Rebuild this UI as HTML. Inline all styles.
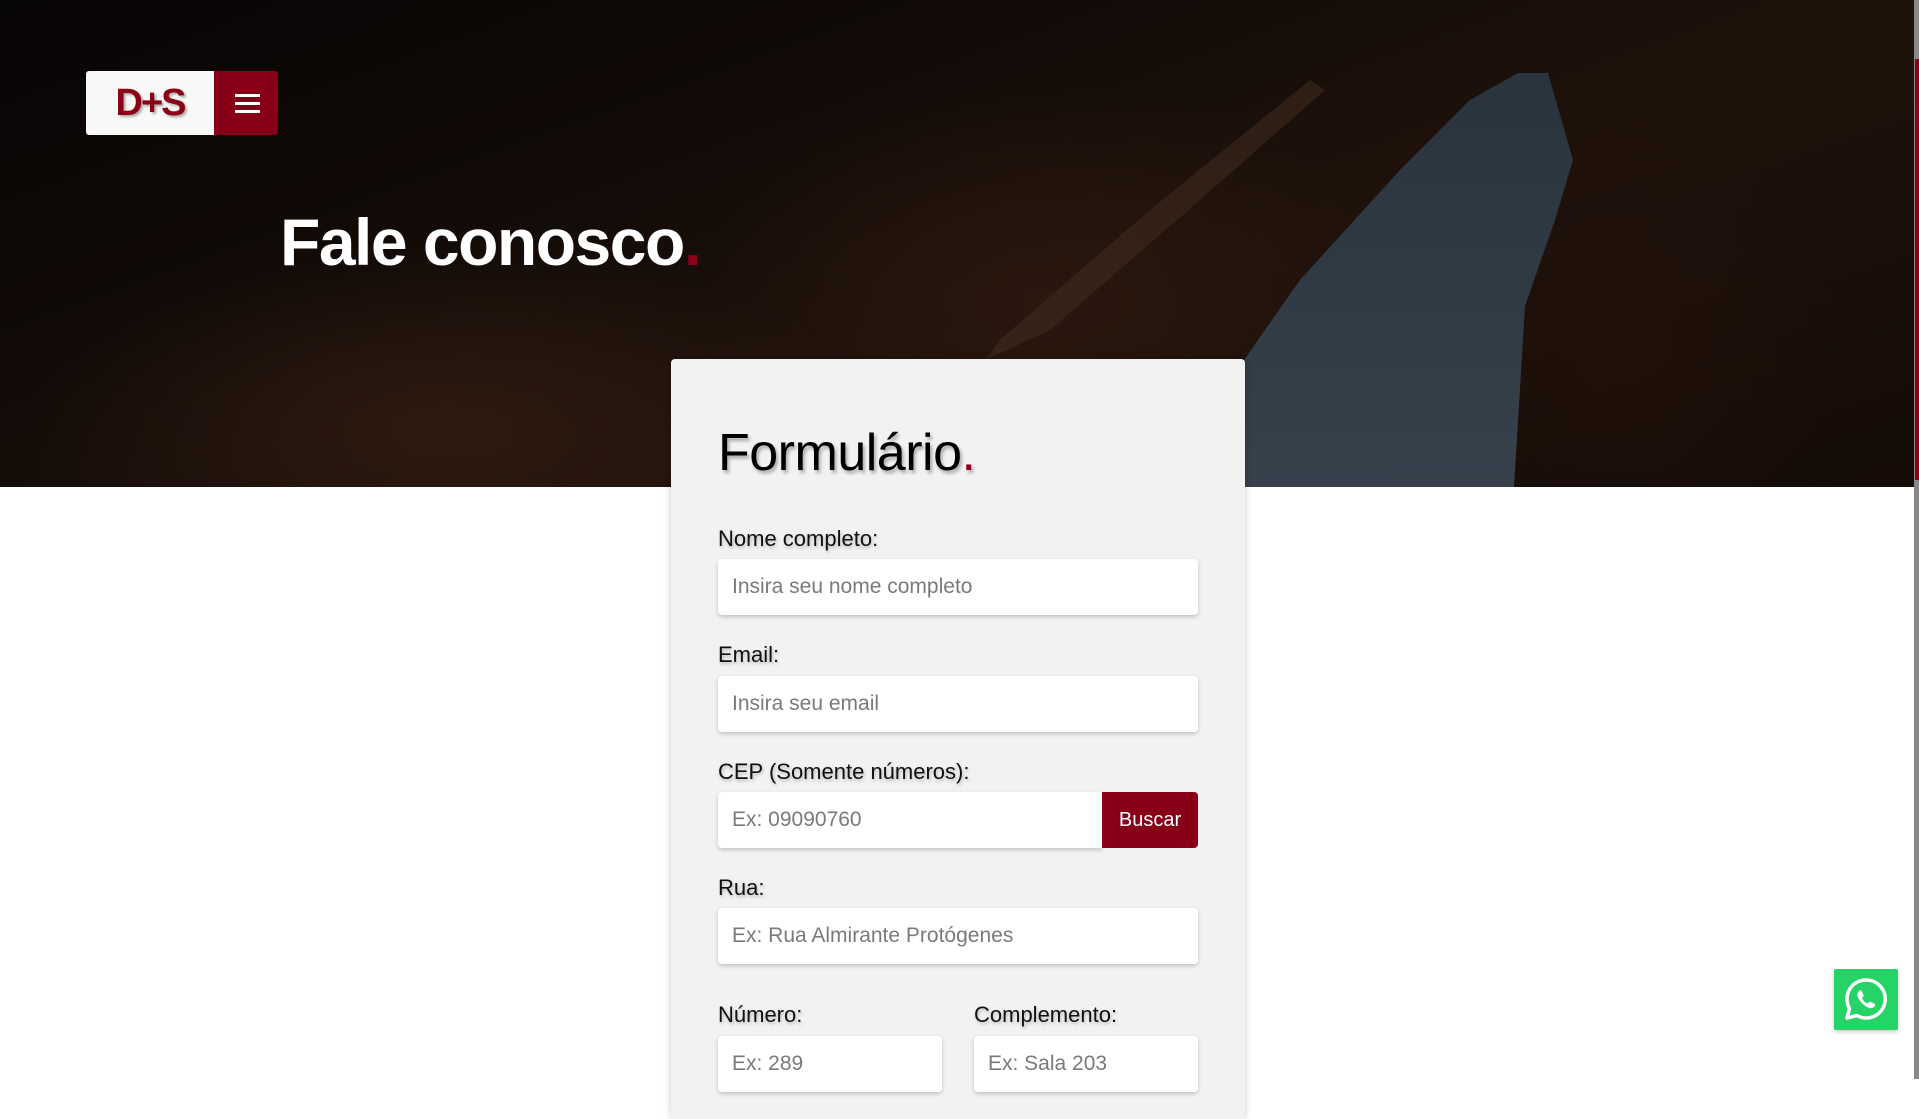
<!DOCTYPE html>
<html><head><meta charset="utf-8"><style>
*{margin:0;padding:0;box-sizing:border-box}
html,body{width:1919px;height:1079px;overflow:hidden;background:#fff;font-family:"Liberation Sans",sans-serif}
.hero{position:absolute;left:0;top:0;width:1914px;height:487px;overflow:hidden;
background:radial-gradient(ellipse 600px 260px at 450px 430px,#2e1a10 0%,rgba(40,22,14,0) 70%),
radial-gradient(ellipse 500px 300px at 1050px 300px,#2a170e 0%,rgba(30,16,10,0) 70%),
radial-gradient(ellipse 300px 350px at 1620px 330px,#201009 0%,rgba(20,10,6,0) 70%),
linear-gradient(160deg,#080505 0%,#110a07 30%,#1f120b 60%,#150b07 100%)}
.sky{position:absolute;inset:0;background:linear-gradient(180deg,#27313b,#36414c);
clip-path:polygon(1518px 73px,1548px 73px,1573px 160px,1555px 220px,1525px 306px,1514px 487px,1175px 487px,1230px 380px,1300px 280px,1400px 170px,1470px 100px)}
.rim{position:absolute;inset:0;background:linear-gradient(120deg,#5a4030,#2e1c12);opacity:.55;
clip-path:polygon(1310px 80px,1325px 90px,1200px 200px,1050px 330px,985px 360px,1000px 340px,1150px 210px)}
.logo{position:absolute;left:86px;top:71px;width:192px;height:64px;border-radius:3px;overflow:hidden;display:flex}
.logo .w{width:128px;background:#f8f8f6;display:flex;align-items:center;justify-content:center;color:#8b0017;font-family:"Liberation Sans",sans-serif;font-weight:bold;font-size:38px;letter-spacing:-2px;text-shadow:2px 2px 2px rgba(0,0,0,.3)}
.logo .r{width:64px;background:#870017;position:relative}
.logo .r i{position:absolute;left:21px;width:25px;height:3px;background:#fff}
h1{position:absolute;left:280px;top:209px;color:#fff;font-size:66px;font-weight:bold;letter-spacing:-1.5px;line-height:1}
.dot{color:#8b0017}
.card{position:absolute;left:671px;top:359px;width:574px;height:760px;background:#f2f2f2;border-radius:4px;box-shadow:0 0 8px rgba(0,0,0,.2)}
h2{position:absolute;left:718px;top:427px;font-size:52px;font-weight:normal;color:#000;text-shadow:2px 3px 3px rgba(0,0,0,.3);line-height:1;letter-spacing:-.5px}
.lab{position:absolute;left:718px;font-size:22px;color:#111;text-shadow:1px 2px 3px rgba(0,0,0,.25)}
.in{position:absolute;background:#fff;border-radius:4px;box-shadow:0 2px 4px rgba(0,0,0,.2);height:56px;color:#7a7a7a;font-size:21px;padding-left:14px;line-height:56px}
.btn{position:absolute;left:1102px;top:792px;width:96px;height:56px;background:#870017;color:#fff;font-size:20px;line-height:56px;text-align:center;border-radius:0 4px 4px 0}
.wa{position:absolute;left:1834px;top:969px;width:64px;height:61px;background:#25d366;border-radius:2px;box-shadow:0 2px 4px rgba(0,0,0,.2)}
.sb{position:absolute;left:1914px;top:0;width:5px;height:1079px;background:#888}
.sbt{position:absolute;left:1915px;top:59px;width:4px;height:421px;background:#8b0017}
</style></head><body>
<div class="hero"><div class="sky"></div><div class="rim"></div></div>
<div class="logo"><div class="w">D+S</div><div class="r"><i style="top:23px"></i><i style="top:31px"></i><i style="top:39px"></i></div></div>
<h1>Fale conosco<span class="dot">.</span></h1>
<div class="card"></div>
<h2>Formulário<span class="dot">.</span></h2>
<div class="lab" style="top:526px">Nome completo:</div>
<div class="in" style="left:718px;top:559px;width:480px">Insira seu nome completo</div>
<div class="lab" style="top:642px">Email:</div>
<div class="in" style="left:718px;top:676px;width:480px">Insira seu email</div>
<div class="lab" style="top:759px">CEP (Somente números):</div>
<div class="in" style="left:718px;top:792px;width:384px;border-radius:4px 0 0 4px">Ex: 09090760</div>
<div class="btn">Buscar</div>
<div class="lab" style="top:875px">Rua:</div>
<div class="in" style="left:718px;top:908px;width:480px">Ex: Rua Almirante Protógenes</div>
<div class="lab" style="top:1002px">Número:</div>
<div class="lab" style="top:1002px;left:974px">Complemento:</div>
<div class="in" style="left:718px;top:1036px;width:224px">Ex: 289</div>
<div class="in" style="left:974px;top:1036px;width:224px">Ex: Sala 203</div>
<div class="wa"><svg width="64" height="61" viewBox="0 0 64 61"><path d="M32 11a19 19 0 0 0-16.5 28.5L13 49l9.8-2.5A19 19 0 1 0 32 11z" fill="none" stroke="#fff" stroke-width="3.5" stroke-linejoin="round"/><path d="M25 22c1-1 2-1 2.6 0l2 4c.4.8 0 1.5-.6 2l-1 1c1 2.5 3 4.5 5.5 5.5l1-1c.5-.6 1.2-1 2-.6l4 2c1 .6 1 1.6 0 2.6-2 2-4.5 2.2-7.5.5-3.5-2-6.5-5-8.5-8.5-1.7-3-1.5-5.5.5-7.5z" fill="#fff"/></svg></div>
<div class="sb"></div><div class="sbt"></div>
</body></html>
